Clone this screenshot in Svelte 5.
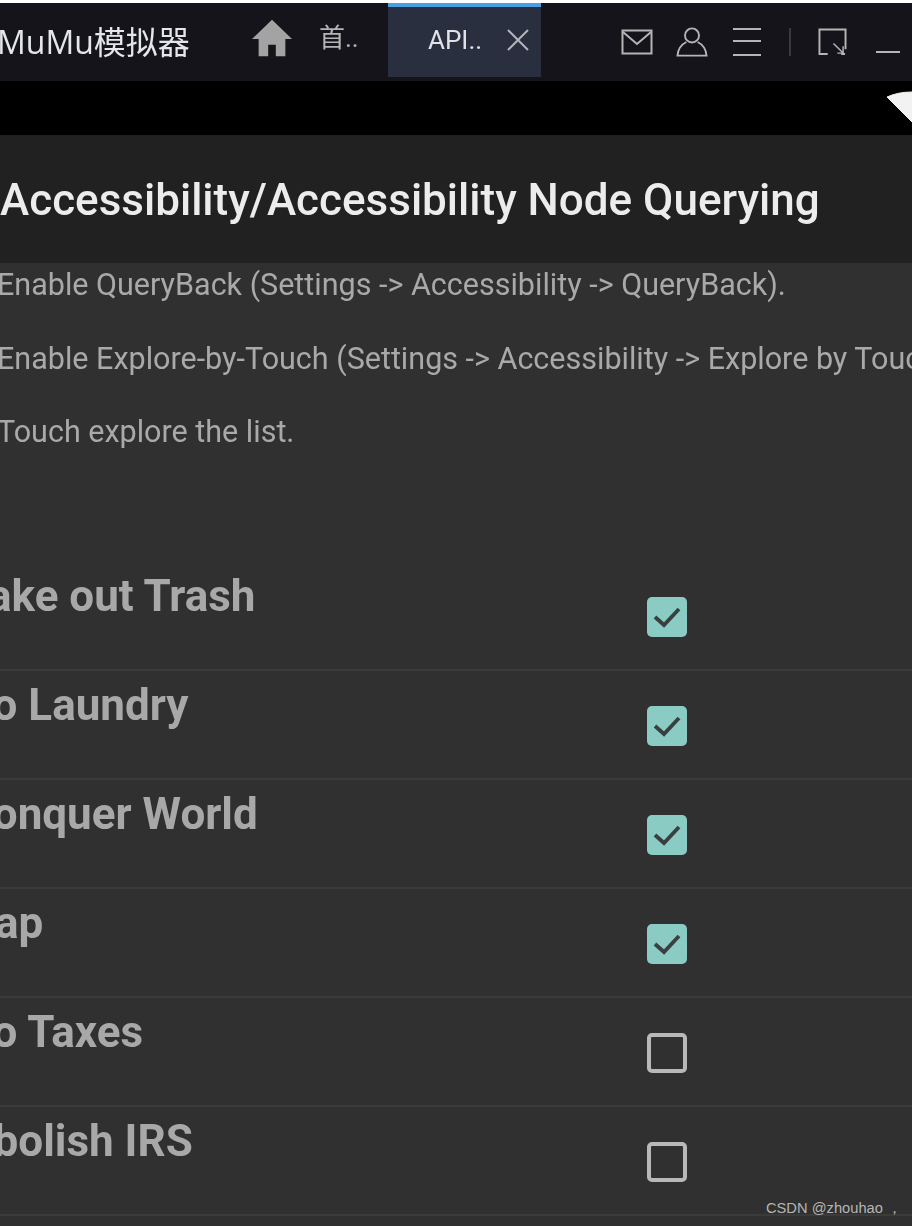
<script lang="ts">
	const tasks = [
		{ title: 'Take out Trash', done: true },
		{ title: 'Do Laundry', done: true },
		{ title: 'Conquer World', done: true },
		{ title: 'Nap', done: true },
		{ title: 'Do Taxes', done: false },
		{ title: 'Abolish IRS', done: false }
	];

	const steps = [
		'Enable QueryBack (Settings -> Accessibility -> QueryBack).',
		'Enable Explore-by-Touch (Settings -> Accessibility -> Explore by Touch).',
		'Touch explore the list.'
	];
</script>

<div class="page">
	<header class="titlebar">
		<div class="brand">MuMu模拟器</div>
		<div class="tab-home">
			<svg width="42" height="40" viewBox="0 0 44 40" class="home">
				<path d="M22 1 L43 21 H36 V39 H26 V27 H18 V39 H8 V21 H1 Z" fill="#a3a3a3" />
			</svg>
			<span>首..</span>
		</div>
		<div class="tab-active">
			<span>API..</span>
			<svg width="24" height="24" viewBox="0 0 24 24">
				<path d="M2 2 L22 22 M22 2 L2 22" stroke="#b4b6ba" stroke-width="2" fill="none" />
			</svg>
		</div>
		<div class="tools">
			<svg width="32" height="26" viewBox="0 0 32 26">
				<rect x="1.5" y="1.5" width="29" height="23" fill="none" stroke="#b5b5b5" stroke-width="2" />
				<path d="M2 3 L16 15 L30 3" fill="none" stroke="#b5b5b5" stroke-width="2" />
			</svg>
			<svg width="32" height="30" viewBox="0 0 34 32">
				<circle cx="17" cy="9" r="7.5" fill="none" stroke="#b5b5b5" stroke-width="2" />
				<path d="M11 16 C5 19 2 24 1.5 30.5 H32.5 C32 24 29 19 23 16" fill="none" stroke="#b5b5b5" stroke-width="2" />
			</svg>
			<svg class="menu" width="28" height="30" viewBox="0 0 28 30">
				<path d="M0 2 H28 M0 14 H28 M0 28 H28" stroke="#b5b5b5" stroke-width="2" fill="none" />
			</svg>
			<i class="sep"></i>
			<svg width="29" height="28" viewBox="0 0 30 29">
				<path d="M10 27 H1.5 V1.5 H28.5 V22 M28 27 H24" fill="none" stroke="#b5b5b5" stroke-width="2" />
				<path d="M16 16 L26 26 M26 19 V26 H20" fill="none" stroke="#b5b5b5" stroke-width="1.5" />
			</svg>
			<i class="min"></i>
		</div>
	</header>

	<div class="statusbar">
		<svg class="wifi" width="26" height="32" viewBox="0 0 26 32">
			<path d="M1 6 Q12 1 26 1 V31 Z" fill="#f2f2f2" stroke="#f2f2f2" stroke-linejoin="round" />
		</svg>
	</div>

	<div class="actionbar">Accessibility/Accessibility Node Querying</div>

	<main class="content">
		<div class="steps">
			{#each steps as step}
				<p>{step}</p>
			{/each}
		</div>

		<ul class="tasks">
			{#each tasks as task}
				<li>
					<span class="label">{task.title}</span>
					<span class="box" class:checked={task.done}>
						{#if task.done}
							<svg width="30" height="24" viewBox="0 0 30 24">
								<path d="M3 12 L12 20 L27 4" fill="none" stroke="#3a3f3f" stroke-width="3.8" />
							</svg>
						{/if}
					</span>
				</li>
			{/each}
		</ul>
	</main>

	<div class="watermark">CSDN @zhouhao ，</div>
</div>

<style>
	:global(body) {
		margin: 0;
		background: #303030;
	}

	.page {
		position: relative;
		width: 912px;
		height: 1226px;
		overflow: hidden;
		padding-top: 3px;
		box-sizing: border-box;
		background: #fff;
		font-family: Roboto, "Noto Sans CJK SC", sans-serif;
	}

	.titlebar {
		height: 78px;
		background: #14141a;
		display: flex;
		align-items: flex-start;
		filter: blur(0.6px);
	}

	.brand {
		width: 250px;
		margin-left: -3px;
		margin-top: 19px;
		font-family: "Open Sans", "Noto Sans CJK SC", sans-serif;
		font-size: 32px;
		line-height: 40px;
		color: #e4e6ea;
		white-space: nowrap;
		flex-shrink: 0;
	}

	.tab-home {
		width: 137px;
		margin-left: 4px;
		margin-top: 13px;
		display: flex;
		align-items: center;
		gap: 26px;
		font-size: 26px;
		line-height: 44px;
		color: #b5b5b5;
		flex-shrink: 0;
	}

	.tab-active {
		width: 153px;
		height: 74px;
		box-sizing: border-box;
		border-top: 4px solid #4a9fe0;
		background: #2a2f3f;
		display: flex;
		align-items: center;
		padding: 0 11px 4px 40px;
		justify-content: space-between;
		font-size: 26px;
		color: #dfe3e8;
		flex-shrink: 0;
	}

	.tools {
		margin-left: 80px;
		margin-top: 23px;
		height: 32px;
		display: flex;
		align-items: center;
		gap: 23px;
		flex-shrink: 0;
	}

	.menu {
		margin-left: 2px;
	}

	.sep {
		width: 2px;
		height: 28px;
		background: #3a3a3e;
		margin-left: 5px;
		margin-right: 4px;
	}

	.min {
		width: 24px;
		height: 2px;
		background: #b5b5b5;
		align-self: flex-end;
		margin-left: 6px;
		margin-bottom: 5px;
	}

	.statusbar {
		height: 54px;
		background: #000;
		position: relative;
		filter: blur(0.6px);
	}

	.wifi {
		position: absolute;
		right: 0;
		top: 10px;
	}

	.actionbar {
		height: 128px;
		box-sizing: border-box;
		background: #212121;
		font-size: 44px;
		font-weight: 500;
		line-height: 130px;
		color: #ececec;
		white-space: nowrap;
		filter: blur(0.6px);
	}

	.content {
		height: 963px;
		background: #303030;
		filter: blur(0.6px);
	}

	.steps {
		margin-left: -3px;
		padding-top: 2px;
		height: 299px;
		box-sizing: border-box;
		font-size: 30.5px;
		color: #a9a9a9;
	}

	.steps p {
		margin: 0;
		height: 73.5px;
		line-height: 40px;
		white-space: nowrap;
	}

	.tasks {
		list-style: none;
		margin: 0;
		padding: 0;
	}

	.tasks li {
		height: 107px;
		border-bottom: 2px solid #3b3b3b;
		display: flex;
	}

	.label {
		display: block;
		width: 683px;
		flex-shrink: 0;
		margin-left: -36px;
		font-size: 44px;
		font-weight: 700;
		line-height: 50px;
		padding-top: 9px;
		box-sizing: border-box;
		color: #a8a8a8;
		white-space: nowrap;
	}

	.box {
		width: 40px;
		height: 40px;
		box-sizing: border-box;
		margin-top: 35px;
		border: 4px solid #b8b8b8;
		border-radius: 5px;
		display: flex;
		align-items: center;
		justify-content: center;
	}

	.box.checked {
		border: none;
		background: #8accc4;
	}

	.watermark {
		position: absolute;
		right: 10px;
		bottom: 9px;
		font-family: "Liberation Sans", sans-serif;
		font-size: 14.7px;
		line-height: 18px;
		color: #b5b5b5;
	}
</style>
